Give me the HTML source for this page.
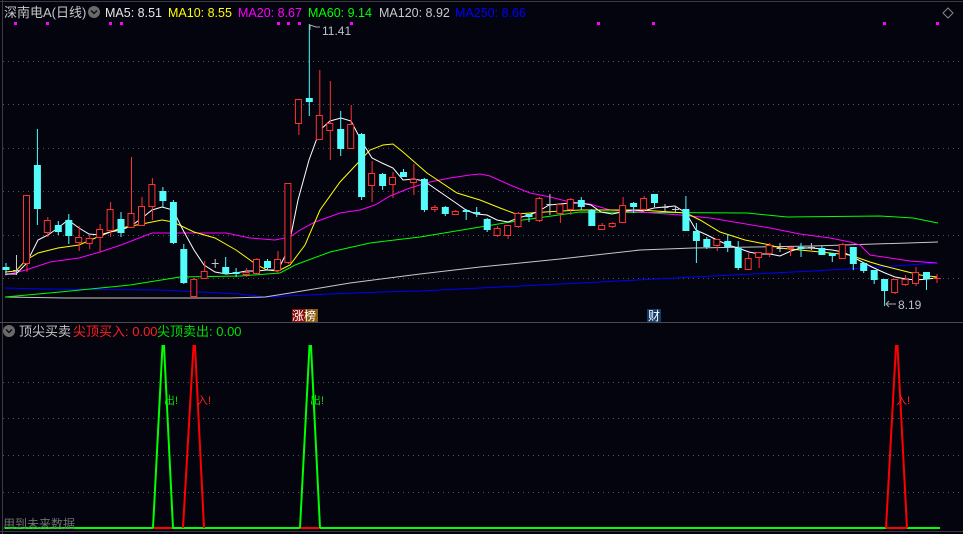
<!DOCTYPE html>
<html><head><meta charset="utf-8"><style>
html,body{margin:0;padding:0;background:#04040e;width:963px;height:534px;overflow:hidden}
svg{display:block}
text{font-family:"Liberation Sans","Noto Sans CJK SC",sans-serif}
</style></head><body>
<svg width="963" height="534" viewBox="0 0 963 534" xmlns="http://www.w3.org/2000/svg">
<rect width="963" height="534" fill="#04040e"/>
<line x1="0" y1="1.5" x2="963" y2="1.5" stroke="#3a3a40"/>
<line x1="2.5" y1="0" x2="2.5" y2="534" stroke="#3a3a40"/>
<line x1="0" y1="322.5" x2="963" y2="322.5" stroke="#4a4a50"/>
<line x1="0" y1="531.5" x2="963" y2="531.5" stroke="#3a3a40"/>
<g stroke="#55555a" stroke-dasharray="1,4">
<line x1="3" y1="61.5" x2="963" y2="61.5"/><line x1="3" y1="104.5" x2="963" y2="104.5"/><line x1="3" y1="148.5" x2="963" y2="148.5"/><line x1="3" y1="191.5" x2="963" y2="191.5"/><line x1="3" y1="235.5" x2="963" y2="235.5"/><line x1="3" y1="278.5" x2="963" y2="278.5"/>
<line x1="3" y1="382.5" x2="963" y2="382.5"/><line x1="3" y1="418.5" x2="963" y2="418.5"/><line x1="3" y1="455.5" x2="963" y2="455.5"/><line x1="3" y1="492.5" x2="963" y2="492.5"/>
</g>
<text x="4" y="17" font-size="13" fill="#c8c8c8">深南电A(日线)</text>
<circle cx="94" cy="12" r="6" fill="#6a6a6a"/><path d="M91 10.5 L94 13.5 L97 10.5" stroke="#111" stroke-width="1.5" fill="none"/>
<g font-size="12.5">
<text x="105" y="17" fill="#e8e8e8">MA5: 8.51</text>
<text x="168" y="17" fill="#ffff00">MA10: 8.55</text>
<text x="238" y="17" fill="#ff00ff">MA20: 8.67</text>
<text x="308" y="17" fill="#00ff00">MA60: 9.14</text>
<text x="379" y="17" fill="#c8c8c8">MA120: 8.92</text>
<text x="455" y="17" fill="#0000ff">MA250: 8.66</text>
</g>
<path d="M948 8 L953 13 L948 18 L943 13 Z" stroke="#888" fill="none"/>
<g fill="#ff00ff">
<rect x="14" y="22" width="3" height="3"/><rect x="46" y="22" width="3" height="3"/><rect x="109" y="22" width="3" height="3"/><rect x="120" y="22" width="3" height="3"/><rect x="277" y="22" width="3" height="3"/><rect x="287" y="22" width="3" height="3"/><rect x="298" y="22" width="3" height="3"/><rect x="350" y="22" width="3" height="3"/><rect x="597" y="22" width="3" height="3"/><rect x="652" y="22" width="3" height="3"/><rect x="883" y="22" width="3" height="3"/><rect x="936" y="22" width="3" height="3"/>
</g>
<g fill="none" stroke-width="1">
<polyline stroke="#0000ff" points="5,288 40,289 160,290 200,292 240,294 265,297 285,296 330,294 380,292 420,291 480,288 600,282 713,276 813,271 880,267 938,263"/>
<polyline stroke="#c8c8c8" points="5,297 65,298 230,298 265,297 290,293 350,283 420,274 480,267 560,259 640,250 693,248 813,246 938,242"/>
<polyline stroke="#00ff00" points="5,297 60,292 130,285 180,277 240,276 280,273 295,265 330,252 370,243 420,237 480,227 523,220 580,212 747,213 787,217 880,216 913,218 938,223"/>
<polyline stroke="#ff00ff" points="5,275 26,270 50,262 79,258 100,252 121,245 152,233 173,233 200,233 226,233 250,238 275,240 290,237 300,230 315,222 340,213 360,210 375,205 390,196 410,188 430,182 450,178 470,175 480,174 490,176 510,185 530,193 550,197 570,202 590,204 610,210 640,212 680,215 710,218 740,223 770,228 800,234 830,238 850,242 860,245 870,255 890,258 910,261 937,263"/>
<polyline stroke="#ffff00" points="5,272 16,271 26,260 38,253 58,248 79,245 100,236 121,228 142,224 162,220 173,222 194,232 215,238 236,250 257,265 267,270 278,271 290,265 305,245 320,210 340,182 355,166 370,150 383,145 393,144 403,152 427,173 457,193 480,200 500,208 516,214 545,212 580,210 640,210 686,213 700,220 720,232 745,240 770,245 780,248 800,250 830,253 850,255 870,262 880,265 900,270 920,275 937,277"/>
<polyline stroke="#ffffff" points="5,274 16,274 26,264 38,240 48,235 58,228 68,220 79,228 89,234 100,235 110,232 121,230 131,226 142,218 152,210 162,207 173,210 183,230 194,250 204,265 215,272 226,274 236,273 246,271 257,271 267,270 278,270 288,250 298,200 309,160 320,130 330,121 341,118 351,121 362,142 372,158 382,163 393,168 403,180 414,179 424,181 440,192 456,203 466,210 476,214 487,215 497,220 508,222 518,218 529,215 539,211 549,205 560,204 570,203 581,203 591,205 601,212 612,214 622,212 633,210 643,211 654,208 664,207 675,206 686,213 696,230 707,235 717,240 728,245 738,248 749,252 759,254 770,254 780,256 791,251 801,248 812,248 822,249 832,250 843,252 853,257 864,263 874,268 885,273 895,277 906,279 916,280 927,279 937,278"/>
</g>
<g stroke="#54fcfc" fill="#54fcfc">
<line x1="6" y1="263" x2="6" y2="273"/><rect x="2.5" y="267" width="7" height="3" stroke="none"/>
<line x1="37.4" y1="129" x2="37.4" y2="225"/><rect x="33.9" y="165" width="7" height="44" stroke="none"/>
<line x1="58.3" y1="221" x2="58.3" y2="235"/><rect x="54.8" y="225" width="7" height="7" stroke="none"/>
<line x1="68.8" y1="214" x2="68.8" y2="244"/><rect x="65.3" y="220" width="7" height="16" stroke="none"/>
<line x1="121" y1="212" x2="121" y2="237"/><rect x="117.5" y="219" width="7" height="14" stroke="none"/>
<line x1="162.9" y1="187" x2="162.9" y2="207"/><rect x="159.4" y="191" width="7" height="10" stroke="none"/>
<line x1="173.4" y1="200" x2="173.4" y2="244"/><rect x="169.9" y="202" width="7" height="41" stroke="none"/>
<line x1="183.8" y1="244" x2="183.8" y2="284"/><rect x="180.3" y="249" width="7" height="34" stroke="none"/>
<line x1="225.7" y1="257" x2="225.7" y2="274"/><rect x="222.2" y="267" width="7" height="7" stroke="none"/>
<line x1="236.1" y1="268" x2="236.1" y2="277"/><rect x="232.6" y="272" width="7" height="2" stroke="none"/>
<line x1="267.5" y1="259" x2="267.5" y2="270"/><rect x="264" y="261" width="7" height="7" stroke="none"/>
<line x1="309.3" y1="24" x2="309.3" y2="116"/><rect x="305.8" y="98" width="7" height="4" stroke="none"/>
<line x1="340.7" y1="111" x2="340.7" y2="156"/><rect x="337.2" y="129" width="7" height="20" stroke="none"/>
<line x1="361.6" y1="133" x2="361.6" y2="200"/><rect x="358.1" y="134" width="7" height="63" stroke="none"/>
<line x1="382.6" y1="173" x2="382.6" y2="190"/><rect x="379.1" y="174" width="7" height="12" stroke="none"/>
<line x1="403.5" y1="169" x2="403.5" y2="177"/><rect x="400" y="172" width="7" height="5" stroke="none"/>
<line x1="424.4" y1="178" x2="424.4" y2="212"/><rect x="420.9" y="179" width="7" height="31" stroke="none"/>
<line x1="445.3" y1="206" x2="445.3" y2="216"/><rect x="441.8" y="207" width="7" height="7" stroke="none"/>
<line x1="466.2" y1="209" x2="466.2" y2="220"/><rect x="462.7" y="210" width="7" height="2" stroke="none"/>
<line x1="476.7" y1="207" x2="476.7" y2="217"/><rect x="473.2" y="212" width="7" height="2" stroke="none"/>
<line x1="487.2" y1="218" x2="487.2" y2="232"/><rect x="483.7" y="219" width="7" height="11" stroke="none"/>
<line x1="529" y1="214" x2="529" y2="222"/><rect x="525.5" y="214" width="7" height="3" stroke="none"/>
<line x1="581.3" y1="197" x2="581.3" y2="210"/><rect x="577.8" y="200" width="7" height="7" stroke="none"/>
<line x1="591.8" y1="209" x2="591.8" y2="226"/><rect x="588.3" y="210" width="7" height="16" stroke="none"/>
<line x1="633.6" y1="202" x2="633.6" y2="213"/><rect x="630.1" y="203" width="7" height="4" stroke="none"/>
<line x1="654.5" y1="194" x2="654.5" y2="207"/><rect x="651" y="194" width="7" height="9" stroke="none"/>
<line x1="685.9" y1="196" x2="685.9" y2="231"/><rect x="682.4" y="209" width="7" height="22" stroke="none"/>
<line x1="696.4" y1="223" x2="696.4" y2="263"/><rect x="692.9" y="231" width="7" height="10" stroke="none"/>
<line x1="706.8" y1="237" x2="706.8" y2="249"/><rect x="703.3" y="239" width="7" height="8" stroke="none"/>
<line x1="727.7" y1="234" x2="727.7" y2="252"/><rect x="724.2" y="241" width="7" height="6" stroke="none"/>
<line x1="738.2" y1="241" x2="738.2" y2="270"/><rect x="734.7" y="248" width="7" height="20" stroke="none"/>
<line x1="801" y1="243" x2="801" y2="257"/><rect x="797.5" y="247" width="7" height="2" stroke="none"/>
<line x1="821.9" y1="246" x2="821.9" y2="255"/><rect x="818.4" y="248" width="7" height="7" stroke="none"/>
<line x1="832.3" y1="253" x2="832.3" y2="262"/><rect x="828.8" y="253" width="7" height="3" stroke="none"/>
<line x1="853.3" y1="247" x2="853.3" y2="270"/><rect x="849.8" y="247" width="7" height="17" stroke="none"/>
<line x1="863.7" y1="262" x2="863.7" y2="273"/><rect x="860.2" y="263" width="7" height="8" stroke="none"/>
<line x1="874.2" y1="270" x2="874.2" y2="284"/><rect x="870.7" y="270" width="7" height="10" stroke="none"/>
<line x1="884.6" y1="279" x2="884.6" y2="306"/><rect x="881.1" y="279" width="7" height="12" stroke="none"/>
<line x1="926.5" y1="272" x2="926.5" y2="290"/><rect x="923" y="272" width="7" height="7" stroke="none"/>
</g>
<g stroke="#ff3232" fill="#04040e">
<line x1="27" y1="195" x2="27" y2="272"/><rect x="23.5" y="195.5" width="6" height="68"/>
<line x1="47.8" y1="217" x2="47.8" y2="237"/><rect x="44.3" y="220.5" width="6" height="12"/>
<line x1="79.2" y1="226" x2="79.2" y2="251"/><rect x="75.7" y="237.5" width="6" height="5"/>
<line x1="89.7" y1="235" x2="89.7" y2="249"/><rect x="86.2" y="238.5" width="6" height="5"/>
<line x1="100.1" y1="224" x2="100.1" y2="252"/><rect x="96.6" y="229.5" width="6" height="8"/>
<line x1="110.6" y1="202" x2="110.6" y2="237"/><rect x="107.1" y="209.5" width="6" height="21"/>
<line x1="131.5" y1="157" x2="131.5" y2="228"/><rect x="128" y="213.5" width="6" height="14"/>
<line x1="142" y1="197" x2="142" y2="225"/><rect x="138.5" y="206.5" width="6" height="19"/>
<line x1="152.4" y1="178" x2="152.4" y2="220"/><rect x="148.9" y="184.5" width="6" height="22"/>
<line x1="194.3" y1="278" x2="194.3" y2="298"/><rect x="190.8" y="279.5" width="6" height="17"/>
<line x1="204.7" y1="261" x2="204.7" y2="278"/><rect x="201.2" y="271.5" width="6" height="7"/>
<line x1="246.6" y1="268" x2="246.6" y2="277"/><rect x="243.1" y="272.5" width="6" height="2"/>
<line x1="257" y1="258" x2="257" y2="273"/><rect x="253.5" y="259.5" width="6" height="14"/>
<line x1="278" y1="251" x2="278" y2="273"/><rect x="274.5" y="259.5" width="6" height="11"/>
<line x1="288.4" y1="183" x2="288.4" y2="264"/><rect x="284.9" y="183.5" width="6" height="79"/>
<line x1="298.9" y1="99" x2="298.9" y2="135"/><rect x="295.4" y="99.5" width="6" height="24"/>
<line x1="319.8" y1="70" x2="319.8" y2="139"/><rect x="316.3" y="115.5" width="6" height="24"/>
<line x1="330.3" y1="81" x2="330.3" y2="160"/><rect x="326.8" y="123.5" width="6" height="7"/>
<line x1="351.2" y1="105" x2="351.2" y2="148"/><rect x="347.7" y="124.5" width="6" height="24"/>
<line x1="372.1" y1="161" x2="372.1" y2="202"/><rect x="368.6" y="173.5" width="6" height="12"/>
<line x1="393" y1="172" x2="393" y2="198"/><rect x="389.5" y="177.5" width="6" height="7"/>
<line x1="413.9" y1="164" x2="413.9" y2="195"/><rect x="410.4" y="179.5" width="6" height="3"/>
<line x1="434.9" y1="205" x2="434.9" y2="212"/><rect x="431.4" y="207.5" width="6" height="2"/>
<line x1="455.8" y1="210" x2="455.8" y2="215"/><rect x="452.3" y="211.5" width="6" height="3"/>
<line x1="497.6" y1="226" x2="497.6" y2="237"/><rect x="494.1" y="228.5" width="6" height="7"/>
<line x1="508.1" y1="225" x2="508.1" y2="239"/><rect x="504.6" y="225.5" width="6" height="10"/>
<line x1="518.5" y1="212" x2="518.5" y2="228"/><rect x="515" y="213.5" width="6" height="13"/>
<line x1="539.5" y1="197" x2="539.5" y2="222"/><rect x="536" y="198.5" width="6" height="22"/>
<line x1="560.4" y1="203" x2="560.4" y2="223"/><rect x="556.9" y="204.5" width="6" height="9"/>
<line x1="570.8" y1="198" x2="570.8" y2="215"/><rect x="567.3" y="199.5" width="6" height="10"/>
<line x1="602.2" y1="223" x2="602.2" y2="230"/><rect x="598.7" y="225.5" width="6" height="4"/>
<line x1="612.7" y1="222" x2="612.7" y2="228"/><rect x="609.2" y="223.5" width="6" height="3"/>
<line x1="623.1" y1="197" x2="623.1" y2="222"/><rect x="619.6" y="205.5" width="6" height="17"/>
<line x1="644.1" y1="196" x2="644.1" y2="212"/><rect x="640.6" y="198.5" width="6" height="11"/>
<line x1="717.3" y1="239" x2="717.3" y2="251"/><rect x="713.8" y="239.5" width="6" height="6"/>
<line x1="748.7" y1="253" x2="748.7" y2="269"/><rect x="745.2" y="258.5" width="6" height="11"/>
<line x1="759.1" y1="252" x2="759.1" y2="268"/><rect x="755.6" y="252.5" width="6" height="5"/>
<line x1="769.6" y1="243" x2="769.6" y2="257"/><rect x="766.1" y="245.5" width="6" height="8"/>
<line x1="790.5" y1="247" x2="790.5" y2="256"/><rect x="787" y="247" width="7" height="2" fill="#ff3232" stroke="none"/>
<line x1="842.8" y1="243" x2="842.8" y2="258"/><rect x="839.3" y="244.5" width="6" height="14"/>
<line x1="895.1" y1="279" x2="895.1" y2="294"/><rect x="891.6" y="279.5" width="6" height="13"/>
<line x1="905.6" y1="275" x2="905.6" y2="286"/><rect x="902.1" y="279.5" width="6" height="5"/>
<line x1="916" y1="267" x2="916" y2="286"/><rect x="912.5" y="272.5" width="6" height="11"/>
<line x1="937" y1="274" x2="937" y2="283"/><line x1="933" y1="278.5" x2="941" y2="278.5"/>
</g>
<g stroke="#c8c8c8">
<line x1="16.5" y1="255" x2="16.5" y2="275"/><line x1="13" y1="270.5" x2="20" y2="270.5"/>
<line x1="215.2" y1="259" x2="215.2" y2="268"/><line x1="211.7" y1="263.5" x2="218.7" y2="263.5"/>
<line x1="549.9" y1="194" x2="549.9" y2="215"/><line x1="546.4" y1="204.5" x2="553.4" y2="204.5"/>
<line x1="665" y1="204" x2="665" y2="212"/><line x1="661.5" y1="207.5" x2="668.5" y2="207.5"/>
<line x1="675.4" y1="206" x2="675.4" y2="213"/><line x1="671.9" y1="209.5" x2="678.9" y2="209.5"/>
<line x1="780" y1="243" x2="780" y2="252"/><line x1="776.5" y1="248.5" x2="783.5" y2="248.5"/>
<line x1="811.4" y1="243" x2="811.4" y2="250"/><line x1="807.9" y1="247.5" x2="814.9" y2="247.5"/>
</g>
<path d="M310 25 L316 27 L320 27" stroke="#aaa" fill="none"/><path d="M310 25 L310 30" stroke="#aaa"/>
<text x="322" y="35" font-size="12" fill="#b8c0d0">11.41</text>
<path d="M886 304 L896 304 M886 304 L889 301 M886 304 L889 307" stroke="#aaa" fill="none"/>
<text x="898" y="309" font-size="12" fill="#b8c0d0">8.19</text>
<rect x="292" y="309" width="13" height="13" fill="#8a0a0a"/><rect x="305" y="309" width="13" height="13" fill="#8a5a10"/>
<text x="292" y="320" font-size="12" fill="#fff">涨榜</text>
<rect x="647" y="309" width="14" height="13" fill="#123a6a"/>
<text x="648" y="320" font-size="12" fill="#fff">财</text>
<circle cx="9" cy="331" r="6" fill="#6a6a6a"/><path d="M6 329.5 L9 332.5 L12 329.5" stroke="#111" stroke-width="1.5" fill="none"/>
<text x="19" y="336" font-size="13" fill="#c8c8c8">顶尖买卖</text>
<text x="73" y="336" font-size="13" fill="#ff2020">尖顶买入: 0.00</text>
<text x="157" y="336" font-size="13" fill="#00e000">尖顶卖出: 0.00</text>
<g fill="none" stroke-width="2">
<line x1="5" y1="528" x2="940" y2="528" stroke="#00ff00"/>
<line x1="153" y1="528" x2="172" y2="528" stroke="#ff0000"/>
<line x1="300" y1="528" x2="320" y2="528" stroke="#ff0000"/>
<line x1="886" y1="528" x2="907" y2="528" stroke="#ff0000"/>
<polyline stroke="#00ff00" points="153,528 162.5,346 164,346 173,528"/>
<polyline stroke="#ff0000" points="183,528 193.5,346 195,346 204,528"/>
<polyline stroke="#00ff00" points="300,528 309.5,346 311,346 320,528"/>
<polyline stroke="#ff0000" points="886,528 896,346 897.5,346 907,528"/>
</g>
<text x="164" y="404" font-size="11" fill="#00e000">出!</text>
<text x="197" y="404" font-size="11" fill="#ff2020">入!</text>
<text x="310" y="404" font-size="11" fill="#00e000">出!</text>
<text x="896" y="404" font-size="11" fill="#ff2020">入!</text>
<text x="3" y="528" font-size="12" fill="#707070">用到未来数据</text>
</svg>
</body></html>
